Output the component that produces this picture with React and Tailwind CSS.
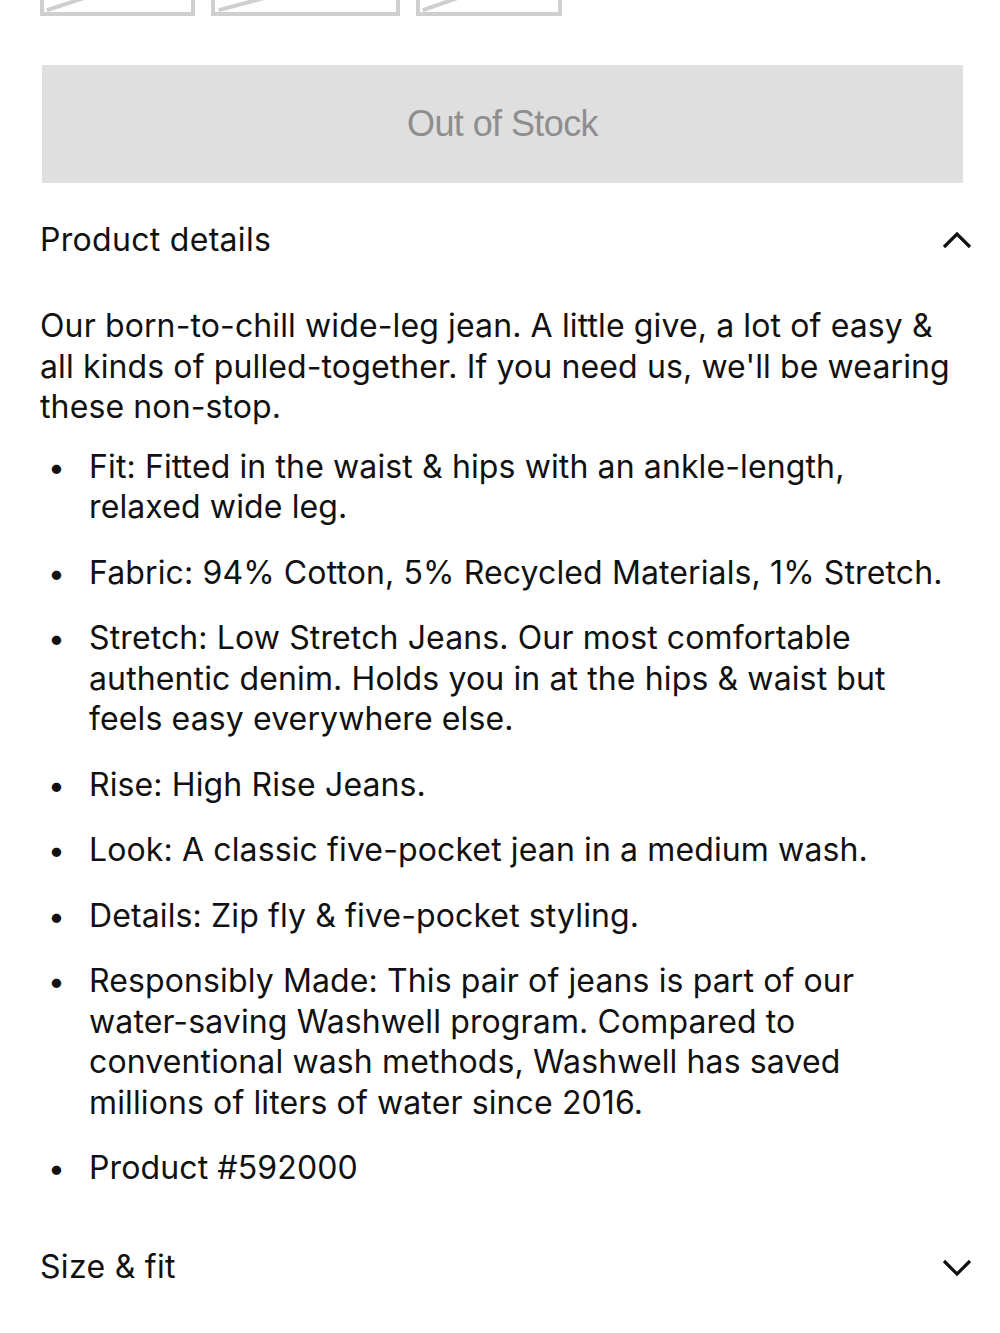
import React from "react";

const bullets = [
  "Fit: Fitted in the waist & hips with an ankle-length, relaxed wide leg.",
  "Fabric: 94% Cotton, 5% Recycled Materials, 1% Stretch.",
  "Stretch: Low Stretch Jeans. Our most comfortable authentic denim. Holds you in at the hips & waist but feels easy everywhere else.",
  "Rise: High Rise Jeans.",
  "Look: A classic five-pocket jean in a medium wash.",
  "Details: Zip fly & five-pocket styling.",
  "Responsibly Made: This pair of jeans is part of our water-saving Washwell program. Compared to conventional wash methods, Washwell has saved millions of liters of water since 2016.",
  "Product #592000",
];

function SizeBox({ w }) {
  return (
    <div className={`relative h-[40px] border-[4px] border-t-0 border-[#cfcfcf] overflow-hidden ${w}`}>
      <svg className="absolute left-0 top-0 w-full h-full" preserveAspectRatio="none" viewBox="0 0 100 40">
        <line x1="2" y1="38" x2="110" y2="-20" stroke="#cfcfcf" strokeWidth="4" vectorEffect="non-scaling-stroke" />
      </svg>
    </div>
  );
}

export default function App() {
  return (
    <div className="w-[1000px] min-h-[1333px] bg-white text-[#111] overflow-hidden" style={{ fontFamily: "Inter, 'Helvetica Neue', Arial, sans-serif" }}>
      <div className="flex gap-[16px] pl-[40px] -mt-[24px]">
        <SizeBox w="w-[155px]" />
        <SizeBox w="w-[189px]" />
        <SizeBox w="w-[146px]" />
      </div>
      <div className="px-[42px] pt-[49px]">
        <div className="h-[118px] w-[921px] bg-[#dfdfdf] flex items-center justify-center text-[#8e8e8e] text-[36px] tracking-[-0.6px]" style={{ fontFamily: "'Liberation Sans', Arial, sans-serif" }}>
          Out of Stock
        </div>
      </div>
      <div className="pl-[40px] pr-[28px]">
        <div className="flex items-center justify-between h-[50px] mt-[32px]">
          <span className="text-[32px] tracking-[0.3px]">Product details</span>
          <svg width="30" height="20" viewBox="0 0 30 20" className="mr-0">
            <polyline points="2,17 15,4 28,17" fill="none" stroke="#111" strokeWidth="3.2" />
          </svg>
        </div>
        <p className="mt-[41px] text-[32px] leading-[40.5px] tracking-[0.12px] pr-[20px]">
          Our born-to-chill wide-leg jean. A little give, a lot of easy &amp; all kinds of pulled-together. If you need us, we'll be wearing these non-stop.
        </p>
        <ul className="mt-[19px] flex flex-col gap-[25px] pr-[20px]">
          {bullets.map((b, i) => (
            <li key={i} className="flex text-[32px] leading-[40.5px] tracking-[0.12px]">
              <span className="w-[49px] shrink-0 pl-[8px] text-[30px]">•</span>
              <span>{b}</span>
            </li>
          ))}
        </ul>
        <div className="flex items-center justify-between h-[50px] mt-[53px]">
          <span className="text-[32px] tracking-[0.3px]">Size &amp; fit</span>
          <svg width="30" height="20" viewBox="0 0 30 20">
            <polyline points="2,4 15,17 28,4" fill="none" stroke="#111" strokeWidth="3.2" />
          </svg>
        </div>
      </div>
    </div>
  );
}
